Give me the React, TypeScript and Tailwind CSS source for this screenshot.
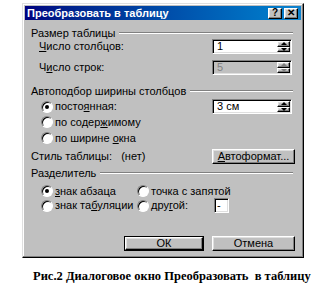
import React from "react";

const raised =
  "bg-[#c0c0c0] border border-t-white border-l-white border-r-black border-b-black shadow-[inset_-1px_-1px_#808080,inset_1px_1px_#dfdfdf]";
const sunken =
  "border border-t-[#808080] border-l-[#808080] border-r-white border-b-white shadow-[inset_1px_1px_#000,inset_-1px_-1px_#dfdfdf]";

const U = ({ children }: { children: React.ReactNode }) => <span className="underline underline-offset-1">{children}</span>;

const Header = ({ children }: { children: React.ReactNode }) => (
  <div className="flex items-center h-[14px]">
    <span className="pr-1 whitespace-nowrap">{children}</span>
    <div className="flex-1 h-[2px] border-t border-t-[#808080] border-b border-b-white mr-[2px]" />
  </div>
);

const Spinner = ({ disabled }: { disabled?: boolean }) => (
  <div className="flex flex-col w-[13px] h-full">
    <div className={`${raised} flex-1 flex items-center justify-center`}>
      <div className={`w-0 h-0 border-l-[3px] border-r-[3px] border-b-[3px] border-transparent ${disabled ? "border-b-[#808080]" : "border-b-black"}`} />
    </div>
    <div className={`${raised} flex-1 flex items-center justify-center`}>
      <div className={`w-0 h-0 border-l-[3px] border-r-[3px] border-t-[3px] border-transparent ${disabled ? "border-t-[#808080]" : "border-t-black"}`} />
    </div>
  </div>
);

const SpinInput = ({ value, disabled }: { value: string; disabled?: boolean }) => (
  <div className={`${sunken} w-[80px] h-[15px] mr-[3px] flex items-stretch p-[1px] ${disabled ? "bg-[#c0c0c0]" : "bg-white"}`}>
    <span className={`flex-1 pl-[3px] leading-[11px] ${disabled ? "text-[#808080]" : "text-black"}`}>{value}</span>
    <Spinner disabled={disabled} />
  </div>
);

const Radio = ({ checked, children }: { checked?: boolean; children: React.ReactNode }) => (
  <div className="flex items-center gap-[2px] whitespace-nowrap">
    <div className="w-[12px] h-[12px] rounded-full bg-white border border-t-[#808080] border-l-[#808080] border-r-white border-b-white shadow-[inset_1px_1px_#000] flex items-center justify-center">
      {checked && <div className="w-[4px] h-[4px] rounded-full bg-black" />}
    </div>
    <span>{children}</span>
  </div>
);

export default function App() {
  return (
    <div className="w-[327px] h-[293px] bg-white pt-[3px] pl-[22px] text-[11px] text-black font-['Liberation_Sans',Arial,sans-serif]">
      <div className="w-[282px] h-[255px] bg-[#c0c0c0] border border-t-[#dfdfdf] border-l-[#dfdfdf] border-r-black border-b-black shadow-[inset_-1px_-1px_#808080,inset_1px_1px_white] p-[2px] flex flex-col">
        <div className="h-[14px] bg-gradient-to-r from-[#000080] to-[#1084d0] flex items-center pl-[2px] pr-[3px]">
          <span className="flex-1 text-white font-bold text-[11px] leading-none">Преобразовать в таблицу</span>
          <div className={`${raised} w-[14px] h-[11px] flex items-center justify-center font-bold text-[10px] leading-none`}>?</div>
          <div className={`${raised} w-[14px] h-[11px] ml-[2px] flex items-center justify-center font-bold text-[10px] leading-none`}>✕</div>
        </div>

        <div className="flex flex-col px-[6px]">
          <div className="mt-[6px]">
            <Header>Размер таблицы</Header>
          </div>
          <div className="flex items-center h-[15px] mt-[-1px] pl-[8px]">
            <span className="flex-1"><U>Ч</U>исло столбцов:</span>
            <SpinInput value="1" />
          </div>
          <div className="flex items-center h-[15px] mt-[6px] pl-[8px]">
            <span className="flex-1">Ч<U>и</U>сло строк:</span>
            <SpinInput value="5" disabled />
          </div>

          <div className="mt-[9px]">
            <Header>Автоподбор ширины столбцов</Header>
          </div>
          <div className="flex items-center h-[15px] mt-[1px] pl-[10px]">
            <div className="flex-1">
              <Radio checked>посто<U>я</U>нная:</Radio>
            </div>
            <SpinInput value="3 см" />
          </div>
          <div className="flex items-center h-[16px] pl-[10px]">
            <Radio>по содер<U>ж</U>имому</Radio>
          </div>
          <div className="flex items-center h-[16px] pl-[10px]">
            <Radio>по ширине <U>о</U>кна</Radio>
          </div>

          <div className="flex items-center h-[15px] mt-[3px]">
            <span className="flex-1">Стиль таблицы:&nbsp;&nbsp;&nbsp;(нет)</span>
            <div className={`${raised} w-[83px] h-[15px] flex items-center justify-center`}>
              <span><U>А</U>втоформат...</span>
            </div>
          </div>

          <div className="mt-[2px]">
            <Header>Разделитель</Header>
          </div>
          <div className="flex items-center h-[14px] mt-[4px] pl-[10px]">
            <div className="w-[96px]">
              <Radio checked><U>з</U>нак абзаца</Radio>
            </div>
            <Radio>точка с запятой</Radio>
          </div>
          <div className="flex items-center h-[15px] pl-[10px]">
            <div className="w-[96px]">
              <Radio>знак та<U>б</U>уляции</Radio>
            </div>
            <div className="w-[77px]">
              <Radio>дру<U>г</U>ой:</Radio>
            </div>
            <div className={`${sunken} bg-white w-[15px] h-[15px] flex items-center pl-[2px] leading-none`}>-</div>
          </div>

          <div className="flex justify-end gap-[8px] mt-[23px]">
            <div className="w-[80px] h-[15px] border border-black">
              <div className={`${raised} h-full flex items-center justify-center`}>ОК</div>
            </div>
            <div className={`${raised} w-[83px] h-[15px] flex items-center justify-center`}>Отмена</div>
          </div>
        </div>
      </div>

      <div className="mt-[11px] pl-[11px] font-['Liberation_Serif','Times_New_Roman',serif] font-bold text-[12.5px] leading-[15px] whitespace-pre">
        Рис.2 Диалоговое окно Преобразовать  в таблицу
      </div>
    </div>
  );
}
